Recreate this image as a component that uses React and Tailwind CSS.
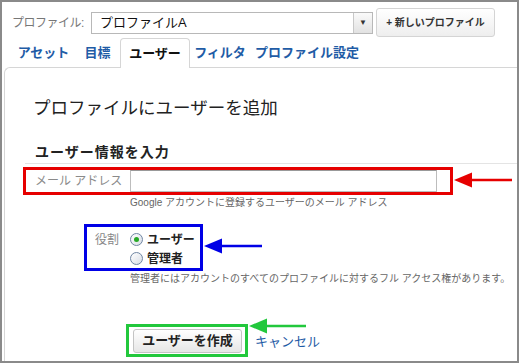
import React from "react";

const Arrow = ({ color, className, width }) => (
  <svg className={className} width={width} height="18" viewBox={`0 0 ${width} 18`}>
    <polygon points="1,9 19,1.5 19,16.5" fill={color} />
    <line x1="18" y1="9" x2={width - 1} y2="9" stroke={color} strokeWidth="2.5" />
  </svg>
);

const Radio = ({ checked }) => (
  <span className="w-[13px] h-[13px] rounded-full border border-[#6f86a3] bg-gradient-to-br from-[#ffffff] to-[#d9dee6] flex items-center justify-center">
    {checked && <span className="w-[5px] h-[5px] rounded-full bg-[#26a926]"></span>}
  </span>
);

const App = () => {
  return (
    <div className="relative w-[519px] h-[363px] border-2 border-[#8a8a8a] bg-white overflow-hidden font-['Liberation_Sans','Noto_Sans_CJK_JP',sans-serif] text-[#222]">
      {/* profile row */}
      <div className="flex items-center pt-[6px] pl-[10px] h-[35px]">
        <div className="w-[79px] text-[12px] text-[#777] tracking-[-0.5px]">プロファイル:</div>
        <div className="w-[282px] h-[22px] border border-[#b8b8b8] flex items-center">
          <div className="flex-1 pl-[8px] text-[13px] text-[#111]">プロファイルA</div>
          <div className="w-[19px] h-full border-l border-[#c8c8c8] bg-gradient-to-b from-[#fafafa] to-[#e2e2e2] flex items-center justify-center text-[8px] text-[#333]">▼</div>
        </div>
        <div className="ml-[3px] w-[119px] h-[29px] rounded-[3px] border border-[#d4d4d4] bg-gradient-to-b from-[#ffffff] to-[#eeeeee] flex items-center justify-center text-[10px] font-bold text-[#333]">
          + 新しいプロファイル
        </div>
      </div>

      {/* tabs */}
      <div className="flex items-end mt-[1px] pl-[10px] h-[29px] text-[13px] font-bold">
        <div className="w-[63px] h-full flex items-center justify-center text-[#1f5ca6]">アセット</div>
        <div className="w-[45px] h-full flex items-center justify-center text-[#1f5ca6]">目標</div>
        <div className="relative z-10 w-[70px] -mb-[1px] h-[30px] flex items-center justify-center rounded-t-[4px] border border-b-0 border-[#d6d6d6] bg-white text-[#111]">ユーザー</div>
        <div className="w-[60px] h-full flex items-center justify-center text-[#1f5ca6]">フィルタ</div>
        <div className="w-[114px] h-full flex items-center justify-center text-[#1f5ca6]">プロファイル設定</div>
      </div>

      {/* panel */}
      <div className="ml-[2px] h-[296px] border-l border-t border-[#d6d6d6] rounded-tl-[6px]">
        <div className="ml-[28px] mt-[28px] text-[17.5px] leading-[24px] text-[#222]">プロファイルにユーザーを追加</div>
        <div className="ml-[30px] mt-[22px] text-[14px] leading-[20px] font-bold tracking-[1px] text-[#222]">ユーザー情報を入力</div>
        <div className="ml-[20px] mt-[1px] border-t border-[#e4e4e4]"></div>

        <div className="ml-[18px] mt-[3px] w-[430px] h-[28px] border-[3px] border-[#e60000] flex items-center">
          <div className="w-[104px] pl-[9px] text-[12px] text-[#8a8a8a]">メール アドレス</div>
          <div className="w-[307px] h-[22px] border border-[#bdbdbd] border-t-[#999]"></div>
        </div>
        <div className="ml-[125px] mt-[1px] text-[10px] leading-[14px] text-[#666] whitespace-nowrap">Google アカウントに登録するユーザーのメール アドレス</div>

        <div className="ml-[79px] mt-[14px] w-[119px] h-[47px] border-[3px] border-[#0000e6] pt-[3px] flex">
          <div className="w-[43px] pl-[8px] h-[19px] flex items-center text-[12px] text-[#888]">役割</div>
          <div className="flex flex-col">
            <div className="h-[19px] flex items-center gap-[4px]">
              <Radio checked />
              <span className="text-[12px] font-bold text-[#222]">ユーザー</span>
            </div>
            <div className="h-[19px] flex items-center gap-[4px]">
              <Radio />
              <span className="text-[12px] font-bold text-[#222]">管理者</span>
            </div>
          </div>
        </div>
        <div className="ml-[125px] mt-[1px] text-[10px] leading-[14px] text-[#666] whitespace-nowrap">管理者にはアカウントのすべてのプロファイルに対するフル アクセス権があります。</div>

        <div className="mt-[38px] flex items-center">
          <div className="ml-[121px] w-[122px] h-[33px] border-[3px] border-[#22c83c] flex items-center">
            <div className="ml-[4px] w-[109px] h-[24px] rounded-[3px] border border-[#c4c4c4] bg-gradient-to-b from-[#ffffff] to-[#e6e6e6] flex items-center justify-center text-[13px] font-bold text-[#222]">
              ユーザーを作成
            </div>
          </div>
          <div className="ml-[7px] text-[13px] text-[#1f5ca6] mt-[3px]">キャンセル</div>
        </div>
      </div>

      {/* annotation arrows */}
      <Arrow color="#e60000" width={60} className="absolute left-[451px] top-[169px]" />
      <Arrow color="#0000e6" width={60} className="absolute left-[201px] top-[235px]" />
      <Arrow color="#22c83c" width={59} className="absolute left-[246px] top-[315px]" />
    </div>
  );
};

export default App;
